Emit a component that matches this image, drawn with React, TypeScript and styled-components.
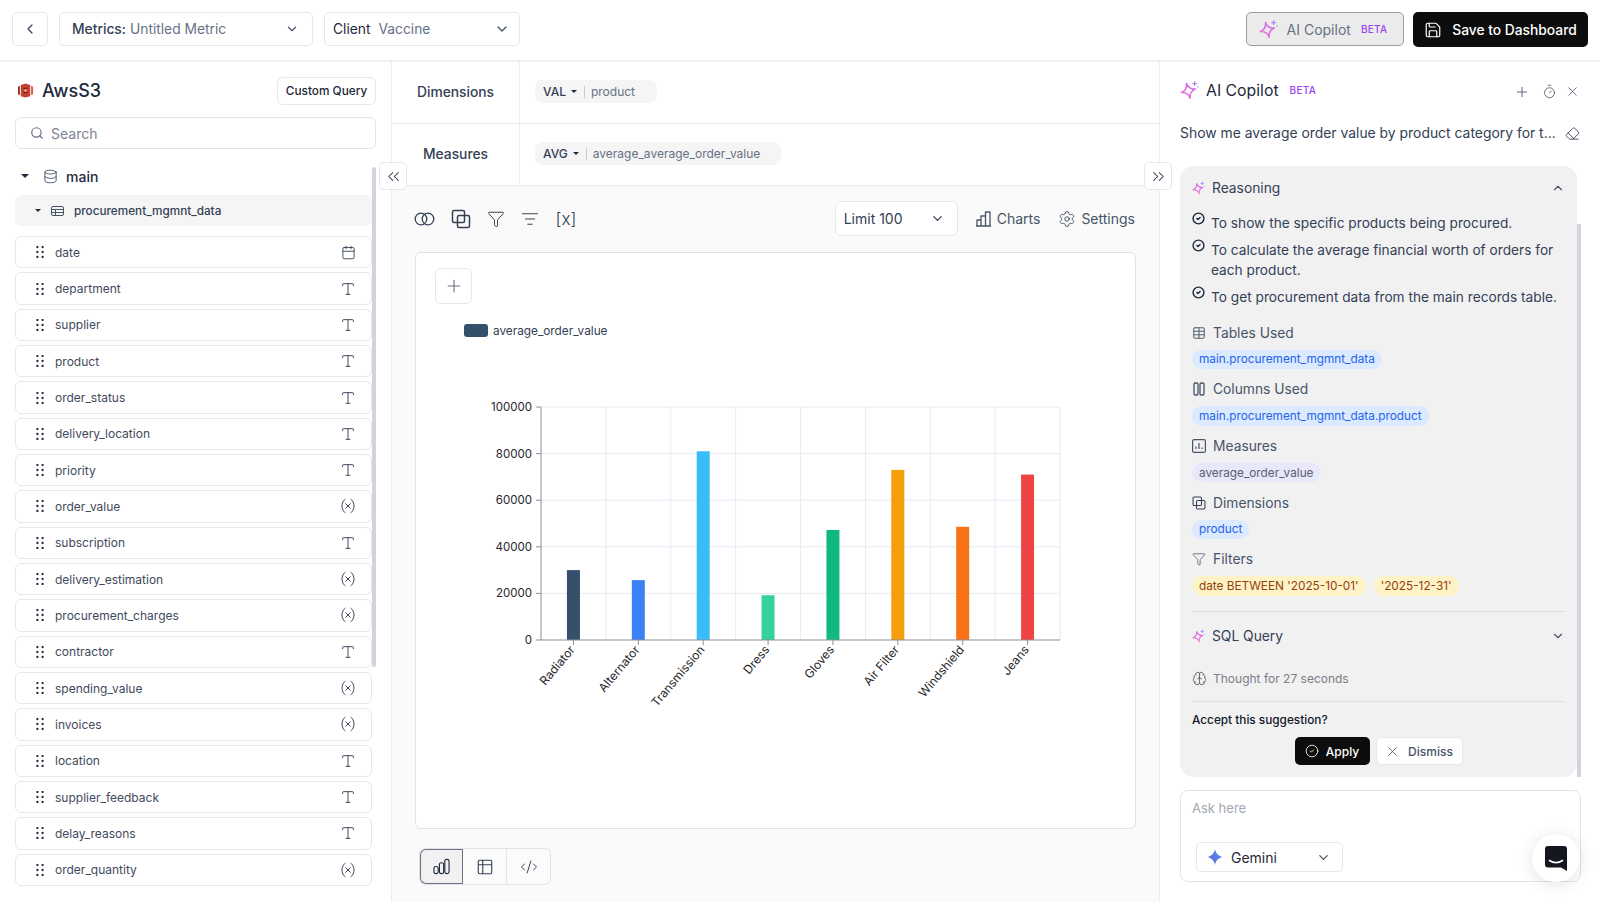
import React, { useId } from "react";
import styled, { createGlobalStyle } from "styled-components";
import {
  Brain, Calendar, ChevronDown, ChevronLeft, ChevronsLeft, ChevronsRight, ChevronUp, CircleCheck,
  CodeXml, Database, Eraser, Funnel, ListFilter, Plus, Save, Search as SearchIcon, Settings,
  Table, Table2, Timer, Type, Variable, X,
} from "lucide-react";

const Global = createGlobalStyle`
  html, body { margin: 0; padding: 0; width: 1600px; height: 902px; overflow: hidden; background: #fff; }
  body { font-family: Inter, "Noto Sans", sans-serif; color: #1e293b; }
  * { box-sizing: border-box; }
`;

const Page = styled.div`width: 1600px; height: 902px; display: flex; flex-direction: column; background: #fff;`;
const Header = styled.header`
  height: 62px; flex: none; padding: 12px 12px 0; border-bottom: 2px solid #f1f1f3; display: flex; align-items: flex-start; gap: 11px;
`;
const BackButton = styled.button`
  width: 36px; height: 34px; padding: 0; background: #fff; border: 1px solid #e7e7eb; border-radius: 5px; color: #344054;
  display: flex; align-items: center; justify-content: center;
`;
const Select = styled.div<{ $w: number; $pl: number; $pr: number }>`
  width: ${(p) => p.$w}px; height: 34px; flex: none; padding: 0 ${(p) => p.$pr}px 0 ${(p) => p.$pl}px; background: #fff; border: 1px solid #e7e7eb; border-radius: 5px;
  display: flex; align-items: center; justify-content: space-between; font-size: 13.8px; color: #667085;
  svg { color: #475467; }
`;
const SelectKey = styled.span`color: #344054; font-weight: 500; margin-right: 4px;`;
const ClientKey = styled.span`color: #1e293b; margin-right: 8px;`;
const Spacer = styled.div`flex: 1;`;
const CopilotButton = styled.button`
  width: 158px; height: 34px; margin-right: -2px; background: #ebebec; border: 1px solid #9a9da3; border-radius: 5px; color: #667085;
  display: flex; align-items: center; justify-content: center; gap: 8px; font: 400 14px Inter, sans-serif; padding: 0 4px 0 0;
`;
const Beta = styled.span<{ $ml: number }>`font-size: 10px; font-weight: 500; color: #9b45f0; letter-spacing: .3px; margin-left: ${(p) => p.$ml}px;`;
const SaveButton = styled.button`
  width: 175px; height: 35px; background: #0d0d0d; border: 0; border-radius: 5px; color: #fff; font: 500 13.8px Inter, sans-serif;
  display: flex; align-items: center; justify-content: center; gap: 10px;
`;
const Main = styled.main`flex: 1; display: flex; position: relative; min-height: 0;`;

const Left = styled.aside`width: 392px; flex: none; border-right: 1px solid #ececef; padding: 15px 0 0 15px; position: relative;`;
const SourceRow = styled.div`display: flex; align-items: center; justify-content: space-between; height: 28px; padding-right: 15px; padding-left: 3px;`;
const SourceTitle = styled.div`display: flex; align-items: center; gap: 9px; font-size: 18px; font-weight: 500; color: #1e293b; margin-top: -2px;`;
const SmallOutline = styled.button`
  width: 99px; height: 28px; background: #fff; border: 1px solid #e7e7eb; border-radius: 6px; font: 500 11.8px Inter, sans-serif; color: #1e293b; padding: 0;
`;
const SearchBox = styled.div`
  margin-top: 12px; width: 361px; height: 32px; border: 1px solid #e4e4e8; border-radius: 6px; display: flex; align-items: center; gap: 7px; padding-left: 14px;
  font-size: 14px; color: #7b8494;
`;
const TreeRow = styled.div`height: 30px; margin-top: 12px; display: flex; align-items: center; font-size: 14px; font-weight: 500; color: #1e293b; padding-left: 6px; gap: 14px;`;
const TreeLabel = styled.span`margin-left: -6px;`;
const Caret = styled.i`display: inline-block; width: 0; height: 0; border-left: 4px solid transparent; border-right: 4px solid transparent; border-top: 4.5px solid #1e293b;`;
const SmallCaret = styled(Caret)`border-left-width: 3px; border-right-width: 3px; border-top-width: 3.5px;`;
const TableCaret = styled(SmallCaret)`margin-left: 4px;`;
const TableRow = styled.div`
  margin-top: 4px; width: 357px; height: 31px; background: #f5f5f6; border-radius: 6px; display: flex; align-items: center; padding-left: 16px; gap: 10px;
  font-size: 11.75px; font-weight: 500; color: #344054;
`;
const FieldList = styled.div`margin-top: 10px; width: 357px; display: flex; flex-direction: column; gap: 3.95px;`;
const FieldRow = styled.div`
  height: 32.4px; border: 1px solid #e7e7eb; border-radius: 6px; display: flex; align-items: center; justify-content: space-between;
  padding: 0 15px 0 20px; font-size: 12px; color: #3f4a5c;
  svg { color: #344054; }
`;
const FieldName = styled.div`display: flex; align-items: center; gap: 11px;`;
const TypeSlot = styled.span`width: 18px; height: 18px; display: flex; align-items: center; justify-content: center; margin-right: -1px;`;
const LeftScroll = styled.div`position: absolute; left: 372px; top: 105px; width: 4px; height: 500px; background: #cfd5df; border-radius: 2px;`;
const Collapse = styled.button<{ $x: number }>`
  position: absolute; top: 100px; left: ${(p) => p.$x}px; width: 28px; height: 28px; padding: 0; background: #fff; border: 1px solid #e7e7eb; border-radius: 5px; z-index: 3;
  display: flex; align-items: center; justify-content: center; color: #344054;
`;

const Center = styled.section`width: 768px; flex: none; border-right: 1px solid #ececef; display: flex; flex-direction: column;`;
const AxisRow = styled.div`height: 62px; flex: none; border-bottom: 1px solid #ececef; display: flex; align-items: center;`;
const AxisLabel = styled.div`width: 128px; height: 100%; padding-bottom: 2px; border-right: 1px solid #ececef; display: flex; align-items: center; justify-content: center; font-size: 13.8px; font-weight: 500; color: #344054;`;
const AxisPill = styled.div<{ $w: number }>`
  width: ${(p) => p.$w}px; height: 23px; margin: 0 0 2px 15px; background: #f5f5f6; border-radius: 8px; display: flex; align-items: center; padding-left: 8px; font-size: 12px; color: #667085;
`;
const PillKey = styled.span`color: #344054; font-weight: 500; display: flex; align-items: center; gap: 5px;`;
const PillSep = styled.span`width: 1px; height: 12px; background: #c9ccd2; margin: 0 6px 0 7px;`;
const Workspace = styled.div`flex: 1; background: #fafafa; padding: 15px 23px 0; min-height: 0;`;
const Toolbar = styled.div`height: 35px; display: flex; align-items: center; margin-left: -1px; padding-right: 1px; color: #344054;`;
const ToolIcons = styled.div`display: flex; align-items: center; gap: 16px; flex: 1;`;
const ToolText = styled.span`font-size: 17px; font-weight: 300; color: #344054; width: 22px; text-align: center;`;
const LimitSelect = styled.div`
  width: 123px; height: 35px; background: #fff; border: 1px solid #e7e7eb; border-radius: 6px; padding: 0 12px 0 8px; display: flex; align-items: center; justify-content: space-between; font-size: 14px; color: #344054;
`;
const ToolLink = styled.div`display: flex; align-items: center; gap: 5px; font-size: 14px; color: #475467;`;
const ToolLinks = styled.div`display: flex; align-items: center; gap: 18px; margin-left: 17px;`;
const ChartCard = styled.div`margin-top: 16px; height: 577px; background: #fff; border: 1px solid #e1e2e8; border-radius: 6px; padding: 15px 0 0 19px;`;
const AddButton = styled.div`width: 37px; height: 36px; border: 1px solid #e7e7eb; border-radius: 6px; display: flex; align-items: center; justify-content: center; color: #667085;`;
const Legend = styled.div`margin: 20px 0 0 29px; height: 13px; display: flex; align-items: center; gap: 5px; font-size: 11.8px; color: #344054;`;
const Swatch = styled.i`width: 24px; height: 13px; background: #34506b; border-radius: 3px;`;
const ChartSvg = styled.svg`display: block; margin: 59px 0 0 35px; overflow: visible;`;
const ViewToggle = styled.div`margin: 19px 0 0 4px; width: 132px; height: 37px; display: flex; border: 1px solid #e1e2e8; border-radius: 6px; overflow: hidden; background: #fbfbfb;`;
const ViewItem = styled.div<{ $on?: boolean }>`
  flex: 1; display: flex; align-items: center; justify-content: center; color: #344054;
  border-right: 1px solid #e5e6ea;
  &:last-child { border-right: 0; }
  ${(p) => p.$on && "background: #f1f1f2; box-shadow: inset 0 0 0 1px #6b7280; border-radius: 6px 0 0 6px; border-right: 0;"}
`;

const Right = styled.aside`flex: 1; padding: 1px 19px 0 20px; display: flex; flex-direction: column; min-width: 0;`;
const CopilotHead = styled.div`height: 54px; flex: none; display: flex; align-items: center; font-size: 15.8px; font-weight: 400; color: #1e293b;`;
const CopilotTitle = styled.div`display: flex; align-items: center; gap: 6px; flex: 1;`;
const HeadIcons = styled.div`display: flex; align-items: center; gap: 8px; color: #475467; padding-top: 3px; margin-right: 1px;`;
const PlusGap = styled.span`display: flex; margin-right: 4px;`;
const QueryRow = styled.div`height: 32px; flex: none; display: flex; align-items: center; justify-content: space-between; font-size: 13.9px; color: #344054; padding-right: 1px; svg { color: #344054; }`;
const ReasonCard = styled.div`
  margin-top: 17px; width: 397px; height: 611px; flex: none; background: #f1f1f2; border-radius: 14px; padding: 0 12px; position: relative;
  &::after { content: ""; position: absolute; left: 100%; top: 58px; bottom: 0; width: 4px; background: #cfd6dd; }
`;
const SectionHead = styled.div<{ $h: number }>`height: ${(p) => p.$h}px; display: flex; align-items: center; justify-content: space-between; font-size: 13.8px; color: #344054; svg { color: #475467; }`;
const SectionTitle = styled.div`display: flex; align-items: center; gap: 6px;`;
const ReasonList = styled.div`margin: 4px 0 15.5px; display: flex; flex-direction: column; gap: 7px;`;
const ReasonItem = styled.div`display: flex; gap: 6px; font-size: 13.7px; line-height: 20px; color: #344054; svg { flex: none; margin-top: -1px; color: #1e293b; }`;
const Info = styled.div`height: 46.5px; margin-bottom: 10.2px; display: flex; flex-direction: column; gap: 7px; align-items: flex-start;`;
const InfoHead = styled.div`height: 20px; display: flex; align-items: center; gap: 7px; font-size: 13.8px; color: #475467; svg { color: #475467; }`;
const ChipRow = styled.div`display: flex; gap: 8px;`;
const Chip = styled.span<{ $kind: "blue" | "violet" | "amber" }>`
  height: 19.5px; padding: 0 7px; border-radius: 10px; display: inline-flex; align-items: center; font-size: 11.8px;
  background: ${(p) => ({ blue: "#dbeafe", violet: "#e8e8fa", amber: "#fef3c7" }[p.$kind])};
  color: ${(p) => ({ blue: "#2563eb", violet: "#5b6170", amber: "#92400e" }[p.$kind])};
`;
const Rule = styled.div<{ $mt: number }>`height: 1px; background: #dfe0e3; margin-top: ${(p) => p.$mt}px;`;
const Thought = styled.div`margin-top: 8px; height: 20px; display: flex; align-items: center; gap: 6px; font-size: 12px; color: #7a7f87; svg { color: #52575f; }`;
const Accept = styled.div`margin-top: 10px; height: 16px; font-size: 11.8px; font-weight: 500; color: #111827; display: flex; align-items: center;`;
const Actions = styled.div`margin-top: 9px; display: flex; gap: 6px; justify-content: center;`;
const ApplyButton = styled.button`width: 75px; height: 28px; background: #0d0d0d; border: 0; border-radius: 5px; color: #fff; font: 500 12px Inter, sans-serif; display: flex; align-items: center; justify-content: center; gap: 7px; padding: 0;`;
const DismissButton = styled.button`width: 87px; height: 28px; background: #fff; border: 1px solid #e7e7eb; border-radius: 5px; color: #475467; font: 500 12px Inter, sans-serif; display: flex; align-items: center; justify-content: center; gap: 8px; padding: 0;`;
const AskBox = styled.div`margin-top: 13px; width: 401px; height: 92px; flex: none; border: 1px solid #e4e4e8; border-radius: 8px; padding: 9px 12px 0 11px; font-size: 13px; color: #a3a8b5; position: relative;`;
const GeminiSelect = styled.div`
  margin: 26px 0 0 4px; width: 147px; height: 30px; border: 1px solid #e7e7eb; border-radius: 5px; padding: 0 11px 0 10px; display: flex; align-items: center; font-size: 14px; color: #1f2937; gap: 8px;
  svg:last-child { margin-left: auto; color: #475467; }
`;
const ChatBubble = styled.div`
  position: absolute; right: 20px; bottom: 20px; width: 48px; height: 48px; border-radius: 50%; background: #fff; box-shadow: 0 2px 16px rgba(0,0,0,.12);
  display: flex; align-items: center; justify-content: center; z-index: 4;
`;

const Sparkle = ({ size = 20 }: { size?: number }) => {
  const id = useId();
  return (
    <svg width={size} height={size} viewBox="0 0 24 24" fill="none">
      <defs>
        <linearGradient id={id} x1="2" y1="22" x2="22" y2="2" gradientUnits="userSpaceOnUse">
          <stop stopColor="#f472d0" />
          <stop offset=".6" stopColor="#d56ae8" />
          <stop offset="1" stopColor="#8b7cf6" />
        </linearGradient>
      </defs>
      <path transform="rotate(-14 10 13)" d="M10 4c.5 5 3.5 8 8.500 9-5 1-8 4-8.500 9-.5-5-3.500-8-8.500-9 5-1 8-4 8.500-9Z" stroke={`url(#${id})`} strokeWidth="1.900" strokeLinejoin="round" />
      <path d="M17.500 2v4.500M15.300 4.200h4.500" stroke="#a78bfa" strokeWidth="1.500" strokeLinecap="round" />
      <circle cx="21.500" cy="8.500" r=".9" fill="#a78bfa" />
    </svg>
  );
};
const S3Logo = () => (
  <svg width="15" height="17" viewBox="0 0 16 18">
    <path d="M0 5l2-1v10l-2-1z" fill="#8c3123" />
    <path d="M16 5l-2-1v10l2-1z" fill="#e05243" />
    <path d="M3 3l5-1.500L13 3v12l-5 1.500L3 15z" fill="#c8402f" />
    <path d="M6 6h4v1.500H6zm0 4.500h4V12H6z" fill="#6b1f15" />
    <rect x="7" y="7.500" width="2" height="3" fill="#f0b3a9" />
  </svg>
);
const Grip = () => (
  <svg width="8" height="12" viewBox="0 0 8 12" fill="#1e293b">
    {[1, 6, 11].map((y) => [1.4, 6.6].map((x) => <circle key={`${x}${y}`} cx={x} cy={y} r="1.150" />))}
  </svg>
);
const MiniTable = () => (
  <svg width="13" height="12" viewBox="0 0 13 12" fill="none" stroke="#475467" strokeWidth="1">
    <rect x=".5" y="1.500" width="12" height="9" rx="1.500" />
    <path d="M.5 4.500h12M.5 7.500h12M4.500 4.500v6" />
  </svg>
);
const Rings = () => (
  <svg width="21" height="18" viewBox="0 0 21 18" fill="none" stroke="#344054" strokeWidth="1.300">
    <circle cx="7" cy="9" r="5.800" /><circle cx="14" cy="9" r="5.800" />
  </svg>
);
const Overlap = ({ size = 20 }: { size?: number }) => (
  <svg width={size} height={size} viewBox="0 0 20 20" fill="none" stroke="#344054" strokeWidth="1.500" strokeLinejoin="round">
    <rect x="1.500" y="1.500" width="12" height="12" rx="1.500" />
    <rect x="6.500" y="6.500" width="12" height="12" rx="1.500" />
  </svg>
);
const StepBars = () => (
  <svg width="17" height="16" viewBox="0 0 17 16" fill="none" stroke="#475467" strokeWidth="1.300" strokeLinejoin="round">
    <path d="M1 15h15M2 15V9h4v6M6 15V5h4.500v10M10.500 15V1H15v14" />
  </svg>
);
const RoundBars = () => (
  <svg width="17" height="17" viewBox="0 0 18 18" fill="none" stroke="#1e293b" strokeWidth="1.200">
    <rect x="1" y="9" width="4.500" height="7.500" rx="2" /><rect x="6.800" y="5" width="4.500" height="11.500" rx="2" /><rect x="12.500" y="1.500" width="4.500" height="15" rx="2" />
  </svg>
);
const SquareBars = () => (
  <svg width="14" height="14" viewBox="0 0 14 14" fill="none" stroke="#475467" strokeWidth="1.200">
    <rect x=".6" y=".6" width="12.800" height="12.800" rx="1.500" /><path d="M4 10V7.500M7 10V4M10 10V8.500" />
  </svg>
);
const SplitColumns = () => (
  <svg width="14" height="14" viewBox="0 0 14 14" fill="none" stroke="#475467" strokeWidth="1.300">
    <rect x="2" y="1" width="4" height="12" rx="1.200" /><rect x="8" y="1" width="4" height="12" rx="1.200" />
  </svg>
);
const GeminiStar = () => {
  const id = useId();
  return (
    <svg width="16" height="16" viewBox="0 0 16 16">
      <defs>
        <linearGradient id={id} x1="0" y1="16" x2="16" y2="0" gradientUnits="userSpaceOnUse">
          <stop stopColor="#6d5bd0" /><stop offset="1" stopColor="#3f9cf0" />
        </linearGradient>
      </defs>
      <path d="M8 0c.7 4.500 3.500 7.300 8 8-4.500.7-7.300 3.500-8 8-.7-4.500-3.500-7.300-8-8 4.500-.7 7.300-3.500 8-8Z" fill={`url(#${id})`} />
    </svg>
  );
};
const MessengerMark = () => (
  <svg width="22" height="25" viewBox="0 0 22 25">
    <path d="M3 0h16a3 3 0 0 1 3 3v22l-6-3.500H3a3 3 0 0 1-3-3V3a3 3 0 0 1 3-3Z" fill="#14171f" />
    <path d="M4.500 14.500c4 2.600 9 2.600 13 0" stroke="#fff" strokeWidth="1.600" fill="none" strokeLinecap="round" />
  </svg>
);

const fields: [string, "date" | "text" | "num"][] = [
  ["date", "date"], ["department", "text"], ["supplier", "text"], ["product", "text"], ["order_status", "text"],
  ["delivery_location", "text"], ["priority", "text"], ["order_value", "num"], ["subscription", "text"],
  ["delivery_estimation", "num"], ["procurement_charges", "num"], ["contractor", "text"], ["spending_value", "num"],
  ["invoices", "num"], ["location", "text"], ["supplier_feedback", "text"], ["delay_reasons", "text"], ["order_quantity", "num"],
];

const bars = [
  ["Radiator", 30000, "#34506b"], ["Alternator", 25700, "#3b82f6"], ["Transmission", 81000, "#38bdf8"], ["Dress", 19200, "#34d399"],
  ["Gloves", 47200, "#10b981"], ["Air Filter", 73000, "#f59e0b"], ["Windshield", 48600, "#f97316"], ["Jeans", 71000, "#ef4444"],
] as const;

const Chart = () => {
  const x0 = 71, x1 = 590, y0 = 244, y1 = 11;
  const band = (x1 - x0) / 8;
  const fy = (v: number) => y0 - ((y0 - y1) * v) / 100000;
  return (
    <ChartSvg width="620" height="345" viewBox="0 0 620 345" fontFamily="Inter, sans-serif">
      {[0, 1, 2, 3, 4, 5].map((i) => {
        const v = i * 20000;
        return (
          <g key={v}>
            {i > 0 && <line x1={x0} x2={x1} y1={fy(v)} y2={fy(v)} stroke="#e8eaf4" />}
            <line x1={x0 - 5} x2={x0} y1={fy(v)} y2={fy(v)} stroke="#8b8f98" />
            <text x={x0 - 9} y={fy(v) + 4} textAnchor="end" fontSize="11.500" fill="#27272a">{v}</text>
          </g>
        );
      })}
      {bars.map((b, i) => (
        <line key={b[0]} x1={x0 + band * (i + 1)} x2={x0 + band * (i + 1)} y1={y1} y2={y0} stroke="#e8eaf4" />
      ))}
      {bars.map((b, i) => {
        const cx = x0 + band * (i + 0.5);
        return (
          <g key={b[0]}>
            <rect x={cx - 6.500} y={fy(b[1])} width="13" height={y0 - fy(b[1])} fill={b[2]} />
            <line x1={cx} x2={cx} y1={y0} y2={y0 + 5} stroke="#8b8f98" />
            <text transform={`translate(${cx + 2} ${y0 + 10}) rotate(-50)`} textAnchor="end" fontSize="12" fill="#27272a">{b[0]}</text>
          </g>
        );
      })}
      <line x1={x0} x2={x0} y1={y1} y2={y0} stroke="#8b8f98" />
      <line x1={x0} x2={x1} y1={y0} y2={y0} stroke="#8b8f98" />
    </ChartSvg>
  );
};

const App = () => (
  <Page>
    <Global />
    <Header>
      <BackButton><ChevronLeft size={16} strokeWidth={1.800} /></BackButton>
      <Select $w={254} $pl={12} $pr={13}><span><SelectKey>Metrics:</SelectKey>Untitled Metric</span><ChevronDown size={14} /></Select>
      <Select $w={196} $pl={8} $pr={9}><span><ClientKey>Client</ClientKey>Vaccine</span><ChevronDown size={16} /></Select>
      <Spacer />
      <CopilotButton><Sparkle size={20} />AI Copilot<Beta $ml={2}>BETA</Beta></CopilotButton>
      <SaveButton><Save size={18} strokeWidth={1.600} />Save to Dashboard</SaveButton>
    </Header>
    <Main>
      <Left>
        <SourceRow>
          <SourceTitle><S3Logo />AwsS3</SourceTitle>
          <SmallOutline>Custom Query</SmallOutline>
        </SourceRow>
        <SearchBox><SearchIcon size={14} color="#667085" />Search</SearchBox>
        <TreeRow><Caret /><Database size={15} color="#475467" strokeWidth={1.500} /><TreeLabel>main</TreeLabel></TreeRow>
        <TableRow><TableCaret /><MiniTable />procurement_mgmnt_data</TableRow>
        <FieldList>
          {fields.map(([name, kind]) => (
            <FieldRow key={name}>
              <FieldName><Grip />{name}</FieldName>
              <TypeSlot>
                {kind === "date" && <Calendar size={15} strokeWidth={1.400} />}
                {kind === "text" && <Type size={16} strokeWidth={1.400} />}
                {kind === "num" && <Variable size={18} strokeWidth={1.300} />}
              </TypeSlot>
            </FieldRow>
          ))}
        </FieldList>
        <LeftScroll />
      </Left>
      <Collapse $x={379}><ChevronsLeft size={19} strokeWidth={1.300} /></Collapse>
      <Center>
        <AxisRow>
          <AxisLabel>Dimensions</AxisLabel>
          <AxisPill $w={122}><PillKey>VAL<SmallCaret /></PillKey><PillSep />product</AxisPill>
        </AxisRow>
        <AxisRow>
          <AxisLabel>Measures</AxisLabel>
          <AxisPill $w={246}><PillKey>AVG<SmallCaret /></PillKey><PillSep />average_average_order_value</AxisPill>
        </AxisRow>
        <Workspace>
          <Toolbar>
            <ToolIcons>
              <Rings />
              <Overlap size={20} />
              <Funnel size={18} strokeWidth={1.300} />
              <ListFilter size={18} strokeWidth={1.300} />
              <ToolText>[x]</ToolText>
            </ToolIcons>
            <LimitSelect><span>Limit 100</span><ChevronDown size={15} /></LimitSelect>
            <ToolLinks>
              <ToolLink><StepBars />Charts</ToolLink>
              <ToolLink><Settings size={18} strokeWidth={1.300} />Settings</ToolLink>
            </ToolLinks>
          </Toolbar>
          <ChartCard>
            <AddButton><Plus size={20} strokeWidth={1.300} /></AddButton>
            <Legend><Swatch />average_order_value</Legend>
            <Chart />
          </ChartCard>
          <ViewToggle>
            <ViewItem $on><RoundBars /></ViewItem>
            <ViewItem><Table2 size={18} strokeWidth={1.500} /></ViewItem>
            <ViewItem><CodeXml size={18} strokeWidth={1.300} /></ViewItem>
          </ViewToggle>
        </Workspace>
      </Center>
      <Collapse $x={1144}><ChevronsRight size={19} strokeWidth={1.300} /></Collapse>
      <Right>
        <CopilotHead>
          <CopilotTitle><Sparkle size={20} />AI Copilot<Beta $ml={5}>BETA</Beta></CopilotTitle>
          <HeadIcons><PlusGap><Plus size={16} strokeWidth={1.300} /></PlusGap><Timer size={15} strokeWidth={1.300} /><X size={15} strokeWidth={1.300} /></HeadIcons>
        </CopilotHead>
        <QueryRow>Show me average order value by product category for t...<Eraser size={15} strokeWidth={1.400} /></QueryRow>
        <ReasonCard>
          <SectionHead $h={43}>
            <SectionTitle><Sparkle size={14} />Reasoning</SectionTitle>
            <ChevronUp size={14} />
          </SectionHead>
          <ReasonList>
            <ReasonItem><CircleCheck size={13} strokeWidth={2.600} />To show the specific products being procured.</ReasonItem>
            <ReasonItem><CircleCheck size={13} strokeWidth={2.600} />To calculate the average financial worth of orders for each product.</ReasonItem>
            <ReasonItem><CircleCheck size={13} strokeWidth={2.600} />To get procurement data from the main records table.</ReasonItem>
          </ReasonList>
          <Info>
            <InfoHead><Table size={14} strokeWidth={1.600} />Tables Used</InfoHead>
            <Chip $kind="blue">main.procurement_mgmnt_data</Chip>
          </Info>
          <Info>
            <InfoHead><SplitColumns />Columns Used</InfoHead>
            <Chip $kind="blue">main.procurement_mgmnt_data.product</Chip>
          </Info>
          <Info>
            <InfoHead><SquareBars />Measures</InfoHead>
            <Chip $kind="violet">average_order_value</Chip>
          </Info>
          <Info>
            <InfoHead><Overlap size={14} />Dimensions</InfoHead>
            <Chip $kind="blue">product</Chip>
          </Info>
          <Info>
            <InfoHead><Funnel size={14} strokeWidth={1.300} />Filters</InfoHead>
            <ChipRow><Chip $kind="amber">date BETWEEN '2025-10-01'</Chip><Chip $kind="amber">'2025-12-31'</Chip></ChipRow>
          </Info>
          <Rule $mt={15.5} />
          <SectionHead $h={48}>
            <SectionTitle><Sparkle size={14} />SQL Query</SectionTitle>
            <ChevronDown size={14} />
          </SectionHead>
          <Thought><Brain size={15} strokeWidth={1.300} />Thought for 27 seconds</Thought>
          <Rule $mt={13} />
          <Accept>Accept this suggestion?</Accept>
          <Actions>
            <ApplyButton><CircleCheck size={14} strokeWidth={1.400} />Apply</ApplyButton>
            <DismissButton><X size={15} strokeWidth={1.300} />Dismiss</DismissButton>
          </Actions>
        </ReasonCard>
        <AskBox>
          Ask here
          <GeminiSelect><GeminiStar />Gemini<ChevronDown size={15} /></GeminiSelect>
        </AskBox>
        <ChatBubble><MessengerMark /></ChatBubble>
      </Right>
    </Main>
  </Page>
);

export default App;
